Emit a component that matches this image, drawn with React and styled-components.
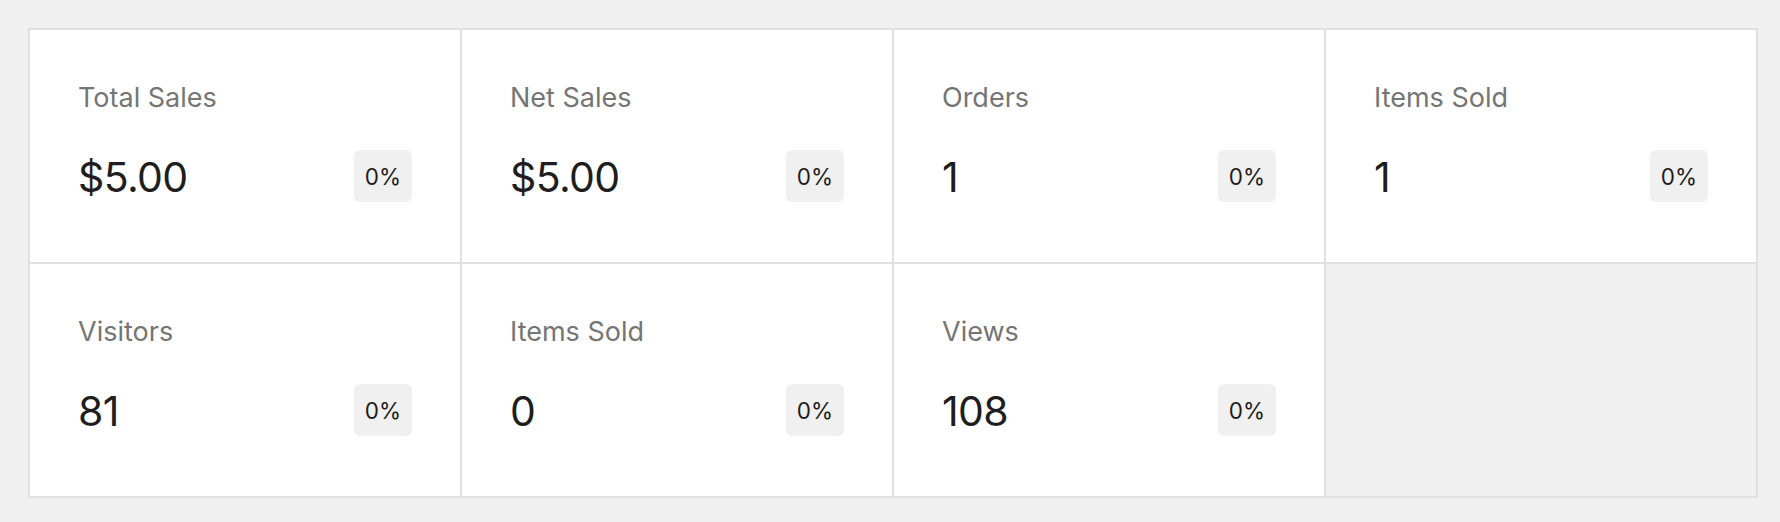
import React from "react";
import styled, { createGlobalStyle } from "styled-components";

const GlobalStyle = createGlobalStyle`
  html, body {
    margin: 0;
    padding: 0;
    background: #f0f0f0;
  }
  body {
    font-family: Inter, "Noto Sans", "Liberation Sans", sans-serif;
    -webkit-font-smoothing: antialiased;
  }
`;

const Page = styled.div`
  padding: 28px 22px 24px 28px;
`;

const SummaryGrid = styled.ul`
  list-style: none;
  margin: 0;
  padding: 0;
  display: grid;
  grid-template-columns: repeat(4, 1fr);
  gap: 2px;
  border: 2px solid #e0e0e0;
  background: #efefef;
`;

const SummaryItem = styled.li`
  background: #ffffff;
  padding: 48px 48px 58px;
  box-shadow: 2px 0 0 #e0e0e0, 0 2px 0 #e0e0e0, 2px 2px 0 #e0e0e0;
`;

const Label = styled.div`
  font-size: 27px;
  line-height: 40px;
  color: #757575;
  font-weight: 400;
`;

const ValueRow = styled.div`
  margin-top: 32px;
  display: flex;
  justify-content: space-between;
  align-items: flex-start;
`;

const Value = styled.div`
  font-size: 41px;
  line-height: 54px;
  letter-spacing: -0.6px;
  color: #1e1e1e;
  font-weight: 400;
`;

const Delta = styled.span`
  display: inline-flex;
  align-items: center;
  justify-content: center;
  height: 52px;
  min-width: 58px;
  box-sizing: border-box;
  padding: 0 10px;
  border-radius: 6px;
  background: #f0f0f0;
  color: #1e1e1e;
  font-size: 22.5px;
`;

const items = [
  { label: "Total Sales", value: "$5.00", delta: "0%" },
  { label: "Net Sales", value: "$5.00", delta: "0%" },
  { label: "Orders", value: "1", delta: "0%" },
  { label: "Items Sold", value: "1", delta: "0%" },
  { label: "Visitors", value: "81", delta: "0%" },
  { label: "Items Sold", value: "0", delta: "0%" },
  { label: "Views", value: "108", delta: "0%" },
];

export default function App() {
  return (
    <>
      <GlobalStyle />
      <Page>
        <SummaryGrid>
          {items.map((item, i) => (
            <SummaryItem key={i}>
              <Label>{item.label}</Label>
              <ValueRow>
                <Value>{item.value}</Value>
                <Delta>{item.delta}</Delta>
              </ValueRow>
            </SummaryItem>
          ))}
        </SummaryGrid>
      </Page>
    </>
  );
}
